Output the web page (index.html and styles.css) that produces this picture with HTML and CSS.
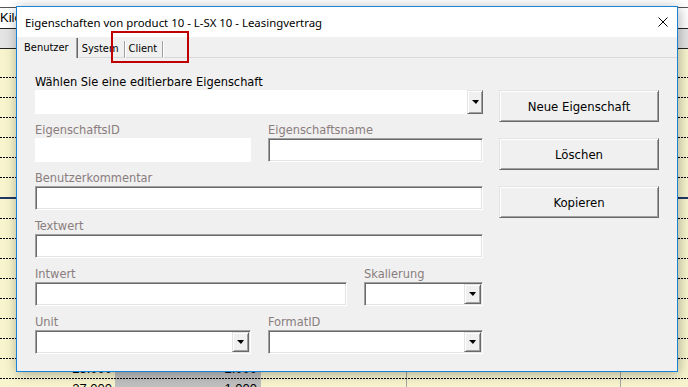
FILE: index.html
```html
<!DOCTYPE html>
<html lang="de">
<head>
  <meta charset="UTF-8" />
  <meta name="viewport" content="width=device-width, initial-scale=1.0"/>
  <title>Eigenschaften</title>
  <link rel="stylesheet" href="styles.css">
</head>
<body>
  <!-- spreadsheet behind the form -->
  <div class="sheet">
    <div class="sheet-top"></div>
    <div class="sheet-head">Kilo</div>
    <div class="sheet-head2"></div>
    <div class="row first"></div>
    <div class="row"></div>
    <div class="row"></div>
    <div class="row"></div>
    <div class="row"></div>
    <div class="row"></div>
    <div class="row total"></div>
    <div class="row"></div>
    <div class="row"></div>
    <div class="row"></div>
    <div class="row"></div>
    <div class="row"></div>
    <div class="row"></div>
    <div class="row"></div>
    <div class="row"></div>
    <div class="row num"><span>25.000</span><span>2.000</span></div>
    <div class="row num"><span>27.000</span><span>1.000</span></div>
  </div>

  <div class="dialog">
    <div class="titlebar">
      <span>Eigenschaften von product 10 - L-SX 10 - Leasingvertrag</span>
      <svg class="close" width="10" height="10" viewBox="0 0 10 10">
        <path d="M0.5 0.5L9.5 9.5M9.5 0.5L0.5 9.5" stroke="#000" stroke-width="1" fill="none"/>
      </svg>
    </div>

    <div class="tabs">
      <div class="tab active">Benutzer</div>
      <div class="tab">System</div>
      <div class="tab">Client</div>
      <div class="tab-fill"></div>
    </div>

    <div class="page">
      <div class="fields">
        <div class="group">
          <div class="lbl dark">Wählen Sie eine editierbare Eigenschaft</div>
          <div class="combo flat"><div class="value"></div><div class="drop"></div></div>
        </div>
        <div class="pair">
          <div class="group">
            <div class="lbl">EigenschaftsID</div>
            <div class="field flat"></div>
          </div>
          <div class="group">
            <div class="lbl">Eigenschaftsname</div>
            <div class="field"></div>
          </div>
        </div>
        <div class="group">
          <div class="lbl">Benutzerkommentar</div>
          <div class="field"></div>
        </div>
        <div class="group">
          <div class="lbl">Textwert</div>
          <div class="field"></div>
        </div>
        <div class="pair wide">
          <div class="group">
            <div class="lbl">Intwert</div>
            <div class="field"></div>
          </div>
          <div class="group">
            <div class="lbl">Skalierung</div>
            <div class="combo"><div class="value"></div><div class="drop"></div></div>
          </div>
        </div>
        <div class="pair">
          <div class="group">
            <div class="lbl">Unit</div>
            <div class="combo"><div class="value"></div><div class="drop"></div></div>
          </div>
          <div class="group">
            <div class="lbl">FormatID</div>
            <div class="combo"><div class="value"></div><div class="drop"></div></div>
          </div>
        </div>
      </div>

      <div class="actions">
        <button class="btn">Neue Eigenschaft</button>
        <button class="btn">Löschen</button>
        <button class="btn">Kopieren</button>
      </div>
    </div>
  </div>

  <div class="marker"></div>
</body>
</html>
```

FILE: styles.css
```css
* {
  box-sizing: border-box;
  margin: 0;
  padding: 0;
}
body {
  width: 688px;
  height: 387px;
  overflow: hidden;
  position: relative;
  font-family: "Liberation Sans", Arial, sans-serif;
  background: #f8f5ce;
}

/* spreadsheet */
.sheet {
  height: 387px;
  background: linear-gradient(to right,
    #f8f5ce 115px, #c0c0c0 115px 261px, #f8f5ce 261px 406px,
    #a6a6a6 406px 407px, #f8f5ce 407px 620px,
    #a6a6a6 620px 621px, #f8f5ce 621px);
}
.sheet-top {
  height: 8px;
  background: #fff;
  border-bottom: 1px solid #555;
}
.sheet-head {
  height: 21px;
  background: #fff;
  border-bottom: 1px solid #222;
  font-size: 13px;
  line-height: 20px;
  color: #000;
}
.sheet-head2 {
  height: 20px;
  background: #e4e4e4;
  border-bottom: 1px solid #222;
}
.row {
  height: 20px;
  background: linear-gradient(to right, #000 2px, transparent 2px) left bottom / 3px 1px repeat-x;
}
.row.first {
  height: 29px;
}
.row.total {
  height: 21px;
  background: none;
  border-bottom: 2px solid #1f3864;
}
.row.num {
  display: grid;
  grid-template-columns: 115px 146px;
  font-size: 13px;
  line-height: 19px;
  color: #000;
}
.row.num span {
  text-align: right;
  padding-right: 3px;
}
.row.num span + span {
  padding-right: 4px;
}

/* dialog window */
.dialog {
  position: absolute;
  left: 16px;
  top: 6px;
  width: 662px;
  height: 366px;
  border: 1px solid #1883d7;
  background: #f0f0f0;
  box-shadow: 1px 2px 12px rgba(0, 0, 0, 0.32);
  font-family: "DejaVu Sans Condensed", "DejaVu Sans", sans-serif;
  font-size: 12.7px;
  color: #000;
}
.titlebar {
  height: 30px;
  background: #fff;
  display: flex;
  align-items: center;
  justify-content: space-between;
  padding: 0 9px 0 8px;
  font-family: "Noto Sans", sans-serif;
  font-size: 11.4px;
}

.tabs {
  display: flex;
  align-items: flex-end;
  height: 21px;
  padding-left: 5px;
  font-size: 11px;
}
.tab {
  height: 17px;
  padding: 1px 5px 0 3px;
  line-height: 13px;
  border-bottom: 1px solid #d9d9d9;
  border-right: 1px solid #a0a0a0;
  box-shadow: 1px 0 0 #fff;
  margin-right: 1px;
}
.tab.active {
  height: 20px;
  padding: 3px 8px 0 2px;
  border-bottom: none;
  border-right: 1px solid #696969;
  box-shadow: inset -1px 0 0 #a0a0a0;
}
.tab-fill {
  flex: 1;
  border-bottom: 1px solid #d9d9d9;
}

.page {
  display: flex;
  gap: 16px;
  padding: 16px 0 0 18px;
}
.fields {
  width: 448px;
  display: flex;
  flex-direction: column;
  gap: 8px;
}
.group {
  display: flex;
  flex-direction: column;
}
.pair {
  display: grid;
  grid-template-columns: 216px 215px;
  gap: 17px;
}
.pair.wide {
  grid-template-columns: 312px 119px;
}
.lbl {
  height: 16px;
  line-height: 16px;
  color: #8a7d7d;
  white-space: nowrap;
}
.lbl.dark {
  color: #000;
}

.field,
.combo {
  height: 24px;
  background: #fff;
  border: 1px solid;
  border-color: #a0a0a0 #fff #fff #a0a0a0;
  box-shadow: inset 1px 1px 0 #696969, inset -1px -1px 0 #e3e3e3;
}
.combo {
  display: flex;
  padding: 1px;
}
.field.flat,
.combo.flat {
  border: none;
  box-shadow: none;
  padding: 0;
}
.value {
  flex: 1;
}
.drop {
  width: 17px;
  background: #f0f0f0;
  border: 1px solid;
  border-color: #e3e3e3 #696969 #696969 #e3e3e3;
  box-shadow: inset 1px 1px 0 #fff, inset -1px -1px 0 #a0a0a0;
  display: flex;
  align-items: center;
  justify-content: center;
}
.combo.flat .drop {
  width: 16px;
}
.drop::after {
  content: "";
  border-left: 4px solid transparent;
  border-right: 3px solid transparent;
  border-top: 4px solid #000;
}

.actions {
  width: 160px;
  display: flex;
  flex-direction: column;
  gap: 16px;
  padding-top: 16px;
}
.btn {
  height: 32px;
  background: #f0f0f0;
  border: 1px solid;
  border-color: #e3e3e3 #696969 #696969 #e3e3e3;
  box-shadow: inset 1px 1px 0 #fff, inset -1px -1px 0 #a0a0a0;
  font-family: inherit;
  font-size: 13px;
  color: #000;
}

/* red annotation box */
.marker {
  position: absolute;
  left: 111px;
  top: 31px;
  width: 78px;
  height: 32px;
  border: 2px solid #c00000;
}
```
